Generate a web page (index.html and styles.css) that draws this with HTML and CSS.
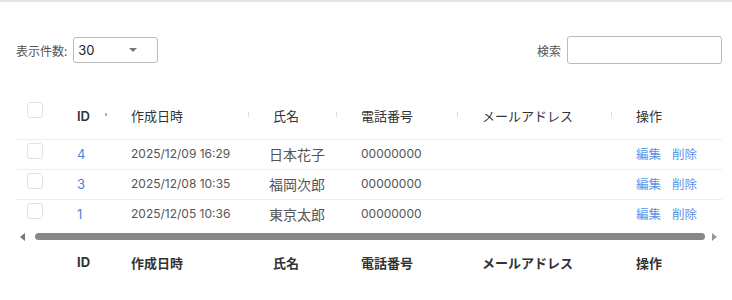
FILE: index.html
```html
<!DOCTYPE html>
<html lang="ja">

<head>
  <meta charset="UTF-8">
  <title>一覧</title>
  <link rel="stylesheet" href="styles.css">
</head>

<body>
  <div class="topline"></div>

  <!-- 表示件数 / 検索 -->
  <div class="controls">
    <label class="length">表示件数:
      <span class="select">30<span class="caret"></span></span>
    </label>
    <label class="search">検索 <span class="search-box"></span></label>
  </div>

  <!-- 一覧 -->
  <table class="list">
    <colgroup>
      <col class="c-check"><col class="c-id"><col class="c-date"><col class="c-name">
      <col class="c-tel"><col class="c-mail"><col class="c-op">
    </colgroup>
    <thead>
      <tr>
        <th class="check"><span class="box"></span></th>
        <th class="id sort asc">ID</th>
        <th class="sort">作成日時</th>
        <th class="sort">氏名</th>
        <th class="sort">電話番号</th>
        <th class="sort">メールアドレス</th>
        <th>操作</th>
      </tr>
    </thead>
    <tbody>
      <tr>
        <td class="check"><span class="box"></span></td>
        <td class="link">4</td>
        <td>2025/12/09 16:29</td>
        <td class="name">日本花子</td>
        <td>00000000</td>
        <td></td>
        <td class="ops"><a>編集</a><a>削除</a></td>
      </tr>
      <tr>
        <td class="check"><span class="box"></span></td>
        <td class="link">3</td>
        <td>2025/12/08 10:35</td>
        <td class="name">福岡次郎</td>
        <td>00000000</td>
        <td></td>
        <td class="ops"><a>編集</a><a>削除</a></td>
      </tr>
      <tr>
        <td class="check"><span class="box"></span></td>
        <td class="link">1</td>
        <td>2025/12/05 10:36</td>
        <td class="name">東京太郎</td>
        <td>00000000</td>
        <td></td>
        <td class="ops"><a>編集</a><a>削除</a></td>
      </tr>
    </tbody>
  </table>

  <!-- 横スクロールバー -->
  <div class="scrollbar">
    <span class="arrow left"></span>
    <span class="thumb"></span>
    <span class="arrow right"></span>
  </div>

  <table class="list foot">
    <colgroup>
      <col class="c-check"><col class="c-id"><col class="c-date"><col class="c-name">
      <col class="c-tel"><col class="c-mail"><col class="c-op">
    </colgroup>
    <tfoot>
      <tr>
        <th></th>
        <th>ID</th>
        <th>作成日時</th>
        <th>氏名</th>
        <th>電話番号</th>
        <th>メールアドレス</th>
        <th>操作</th>
      </tr>
    </tfoot>
  </table>
</body>

</html>
```

FILE: styles.css
```css
* {
  margin: 0;
  padding: 0;
  box-sizing: border-box;
}

body {
  width: 732px;
  height: 300px;
  overflow: hidden;
  background: white;
  font-family: "Inter", "Noto Sans CJK JP", sans-serif;
  font-size: 13px;
  color: #444;
}

.topline {
  height: 2px;
  background: #e4e4e4;
}

/* 表示件数 / 検索 */
.controls {
  display: flex;
  justify-content: space-between;
  align-items: center;
  padding: 32px 10px 0 16px;
  height: 64px;
}

.length,
.search {
  display: flex;
  align-items: center;
  gap: 6px;
  font-family: "Noto Sans CJK JP", sans-serif;
  font-size: 12px;
  color: #555;
}

.select {
  position: relative;
  display: block;
  width: 85px;
  height: 26px;
  padding: 4px 0 0 4px;
  border: 1px solid #bbb;
  border-radius: 3px;
  font-family: "Inter", sans-serif;
  font-size: 13px;
  color: #222;
}

.caret {
  position: absolute;
  left: 55px;
  top: 10px;
  border-left: 4px solid transparent;
  border-right: 4px solid transparent;
  border-top: 4px solid #777;
}

.search-box {
  display: block;
  width: 155px;
  height: 28px;
  border: 1px solid #bbb;
  border-radius: 3px;
}

/* 一覧 */
.list {
  margin: 32px 10px 0 16px;
  width: 706px;
  border-collapse: collapse;
  table-layout: fixed;
}

.c-check { width: 45px; }
.c-id { width: 54px; }
.c-date { width: 142px; }
.c-name { width: 88px; }
.c-tel { width: 121px; }
.c-mail { width: 154px; }
.c-op { width: 102px; }

.list th {
  position: relative;
  height: 41px;
  padding: 0 16px 5px;
  text-align: left;
  font-weight: normal;
  color: #333;
  white-space: nowrap;
  border-bottom: 1px solid #eee;
}

.list th.id {
  font-weight: 600;
}

.list td {
  height: 30px;
  padding: 0 16px 1px;
  font-size: 12px;
  color: #555;
  white-space: nowrap;
  border-bottom: 1px solid #eee;
}

.list tbody tr:last-child td {
  border-bottom: none;
}

.list .check {
  padding: 3px 0 0 11px;
  vertical-align: top;
}

.list th.check {
  padding-top: 4px;
}

.box {
  display: block;
  width: 16px;
  height: 16px;
  border: 1px solid #e2e2e2;
  border-radius: 3px;
}

.sort::after {
  content: "";
  position: absolute;
  right: 8px;
  top: 14px;
  width: 1px;
  height: 5px;
  background: #ddd;
}

.sort.asc::after {
  width: 2px;
  height: 3px;
  top: 15px;
  background: #8fb0e8;
}

.list td.link {
  font-size: 13px;
  color: #4a86e0;
}

.list td.name {
  font-size: 14px;
  padding-left: 12px;
}

.list td.ops {
  font-size: 12.5px;
}

.list td.ops a {
  color: #5b93e6;
  cursor: pointer;
}

.list td.ops a + a {
  margin-left: 11px;
}

/* 横スクロールバー */
.scrollbar {
  display: flex;
  align-items: center;
  margin: 2px 10px 0 16px;
  height: 11px;
  padding: 0 5px 0 4px;
}

.thumb {
  flex: 1;
  height: 7px;
  margin: 0 7px 0 10px;
  border-radius: 4px;
  background: #888;
}

.arrow {
  width: 0;
  height: 0;
  border-top: 4px solid transparent;
  border-bottom: 4px solid transparent;
}

.arrow.left {
  border-right: 5px solid #777;
}

.arrow.right {
  border-left: 5px solid #999;
}

.list.foot {
  margin-top: 5px;
}

.list.foot th {
  height: 30px;
  padding: 0 16px;
  font-weight: bold;
  border-bottom: none;
}
```
